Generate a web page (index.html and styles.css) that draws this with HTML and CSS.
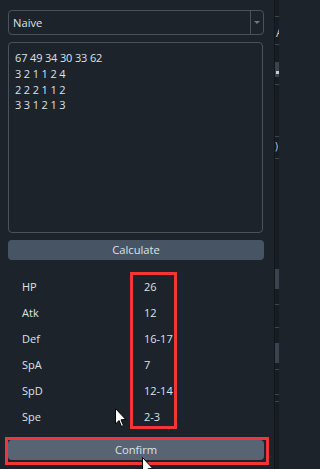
FILE: index.html
```html
<!DOCTYPE html>
<html>
<head>
<meta charset="utf-8">
<link rel="stylesheet" href="styles.css">
</head>
<body>
<div class="app">
  <div class="panel">
    <div class="select">
      <div class="select-text">Naive</div>
      <div class="select-btn"><span class="arrow"></span></div>
    </div>
    <div class="textarea">67 49 34 30 33 62<br>3 2 1 1 2 4<br>2 2 2 1 1 2<br>3 3 1 2 1 3</div>
    <div class="btn calc">Calculate</div>
    <div class="stats">
      <div class="row"><span class="lbl">HP</span><span class="val">26</span></div>
      <div class="row"><span class="lbl">Atk</span><span class="val">12</span></div>
      <div class="row"><span class="lbl">Def</span><span class="val">16-17</span></div>
      <div class="row"><span class="lbl">SpA</span><span class="val">7</span></div>
      <div class="row"><span class="lbl">SpD</span><span class="val">12-14</span></div>
      <div class="row"><span class="lbl">Spe</span><span class="val">2-3</span></div>
      <div class="mark"></div>
    </div>
    <div class="confirm-wrap"><div class="btn confirm">Confirm</div></div>
  </div>
  <div class="strip">
    <div class="ln s1"></div>
    <div class="glyph g1">A</div>
    <div class="ln s2"></div>
    <div class="blk b1"><span class="blk-mark"></span></div>
    <div class="ln s3"></div>
    <div class="ln s4"></div>
    <div class="glyph g2">)</div>
    <div class="ln s5"></div>
    <div class="blk b2"></div>
    <div class="ln s6"></div>
    <div class="ln s7"></div>
    <div class="blk b3"></div>
    <div class="ln s8"></div>
    <div class="ln s9"></div>
    <div class="ln s10"></div>
  </div>
</div>
<svg class="cursor c1" width="12" height="20" viewBox="0 0 12 20"><path d="M0.5 0.5 L0.5 16 L4 12.5 L6.5 18.5 L8.5 17.5 L6 11.8 L10.8 11.5 Z" fill="#fff" stroke="#000" stroke-width="1"/></svg>
<svg class="cursor c2" width="12" height="20" viewBox="0 0 12 20"><path d="M0.5 0.5 L0.5 16 L4 12.5 L6.5 18.5 L8.5 17.5 L6 11.8 L10.8 11.5 Z" fill="#fff" stroke="#000" stroke-width="1"/></svg>
</body>
</html>
```

FILE: styles.css
```css
html, body {
  margin: 0;
  padding: 0;
}
body {
  width: 279px;
  height: 469px;
  overflow: hidden;
  background: #1c232b;
  font-family: "Open Sans", "Liberation Sans", sans-serif;
  font-size: 11px;
  color: #dde2e7;
  position: relative;
}
.app {
  display: flex;
  height: 469px;
}
.panel {
  width: 256px;
  padding: 10px 10px 0 8px;
  border-right: 1px solid #12171c;
  display: flex;
  flex-direction: column;
}
.select {
  height: 23px;
  border: 1px solid #4a525d;
  border-radius: 4px;
  display: flex;
  width: 254px;
}
.select-text {
  flex: 1;
  padding-left: 4px;
  line-height: 23px;
  font-size: 11.2px;
}
.select-btn {
  width: 12px;
  border-left: 1px solid #4a525d;
  display: flex;
  align-items: center;
  justify-content: center;
}
.arrow {
  width: 0;
  height: 0;
  border-left: 3px solid transparent;
  border-right: 3px solid transparent;
  border-top: 3px solid #6f7780;
}
.textarea {
  margin-top: 7px;
  height: 175px;
  width: 241px;
  border: 1px solid #4a525d;
  border-radius: 4px;
  padding: 7px 6px;
  line-height: 15.8px;
  letter-spacing: -0.15px;
}
.btn {
  height: 20px;
  border-radius: 4px;
  text-align: center;
  line-height: 20px;
  font-size: 11.2px;
}
.calc {
  margin-top: 7px;
  background: #475464;
}
.stats {
  margin-top: 13px;
  position: relative;
  display: flex;
  flex-direction: column;
}
.row {
  height: 26px;
  display: grid;
  grid-template-columns: 122px 1fr;
  padding-left: 14px;
  align-items: center;
}
.mark {
  position: absolute;
  left: 122px;
  top: -1px;
  width: 41px;
  height: 151px;
  border: 3px solid #f23535;
}
.confirm-wrap {
  margin-top: 8px;
  margin-left: -3px;
  width: 258px;
  height: 22px;
  border: 3px solid #f23535;
}
.confirm {
  width: 256px;
  background: #566474;
}
.strip {
  flex: 1;
  background: #181d23;
  display: flex;
  flex-direction: column;
  overflow: hidden;
}
.ln {
  height: 1px;
  background: #3c4550;
  flex: none;
}
.s1 { margin-top: 16px; }
.glyph {
  height: 12px;
  line-height: 12px;
  font-size: 12px;
  color: #c9ced4;
  margin-left: 1px;
  flex: none;
}
.g1 { margin-top: 10px; }
.s2 { margin-top: 5px; }
.blk {
  background: #3a434e;
  flex: none;
  position: relative;
}
.b1 { margin-top: 17px; height: 15px; }
.blk-mark {
  position: absolute;
  left: 1px;
  bottom: 3px;
  width: 3px;
  height: 3px;
  background: #c8ccd2;
}
.s3 { margin-top: 7px; }
.s4 { margin-top: 51px; }
.g2 { margin-top: 5px; height: 8px; line-height: 8px; font-size: 10px; margin-left: 0; }
.s5 { margin-top: 8px; }
.b2 { margin-top: 110px; height: 20px; }
.s6 { margin-top: 15px; }
.s7 { margin-top: 22px; }
.b3 { margin-top: 15px; height: 20px; }
.s8 { margin-top: 6px; }
.s9 { margin-top: 24px; }
.s10 { margin-top: 6px; }
.cursor {
  position: absolute;
}
.c1 { left: 115px; top: 408px; }
.c2 { left: 142px; top: 457px; }
```
